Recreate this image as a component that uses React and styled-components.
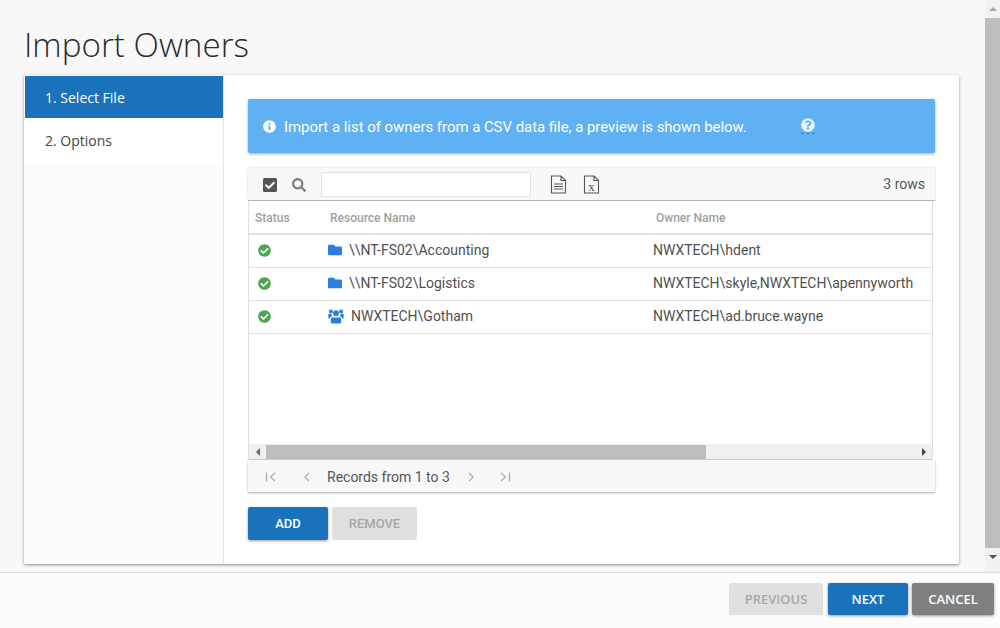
import React from 'react';
import styled, { createGlobalStyle } from 'styled-components';
import { FaInfoCircle, FaQuestionCircle, FaCheckSquare, FaSearch, FaCheckCircle, FaFolder } from 'react-icons/fa';

const GlobalStyle = createGlobalStyle`
  html, body {
    margin: 0;
    padding: 0;
    height: 100%;
    overflow: hidden;
    background: #f8f8f8;
  }
  * {
    box-sizing: border-box;
  }
  body {
    font-family: Roboto, "Liberation Sans", sans-serif;
  }
`;

const Page = styled.div`
  width: 1000px;
  height: 628px;
  display: flex;
  flex-direction: column;
`;

const Upper = styled.div`
  height: 572px;
  display: flex;
`;

const Main = styled.div`
  width: 985px;
  padding: 26px 26px 0 24px;
  display: flex;
  flex-direction: column;
`;

const PageTitle = styled.h1`
  margin: 0;
  height: 49px;
  font-family: "Open Sans", sans-serif;
  font-weight: 300;
  font-size: 33.2px;
  line-height: 38px;
  color: #2b2b2b;
`;

const Card = styled.div`
  height: 489px;
  display: flex;
  background: #fff;
  border-radius: 2px;
  box-shadow: 0 1px 3px rgba(0, 0, 0, 0.45);
`;

const Sidebar = styled.div`
  width: 200px;
  flex: none;
  padding: 1px 0 0 1px;
  background: #fcfcfc;
  border-right: 1px solid #e4e4e4;
`;

const Step = styled.div`
  height: ${p => (p.$active ? '42px' : '45px')};
  margin-bottom: ${p => (p.$active ? '1px' : '0')};
  padding: 0 0 ${p => (p.$active ? '0' : '2px')} 20px;
  display: flex;
  align-items: center;
  font-family: "Open Sans", sans-serif;
  font-size: 14px;
  background: ${p => (p.$active ? '#1a73ba' : '#fff')};
  color: ${p => (p.$active ? '#fff' : '#444')};
`;

const Content = styled.div`
  flex: 1;
  padding: 24px 24px 0 24px;
  display: flex;
  flex-direction: column;
`;

const Banner = styled.div`
  height: 54px;
  padding-left: 15px;
  display: flex;
  align-items: center;
  background: #60b0f4;
  border-radius: 2px;
  box-shadow: 0 1px 3px rgba(0, 0, 0, 0.35);
  color: #fff;
  font-size: 14.9px;
`;

const BannerText = styled.span`
  margin-left: 8px;
  width: 517px;
  padding-top: 1px;
`;

const HelpMark = styled.span`
  display: flex;
  padding-bottom: 1px;
  border-bottom: 1px dashed rgba(60, 80, 100, 0.55);
  color: #e8f6fb;
`;

const Toolbar = styled.div`
  margin-top: 15px;
  height: 33px;
  padding: 1px 10px 0 14px;
  display: flex;
  align-items: center;
  background: #f8f8f8;
  border-bottom: 1px solid #b4b4b4;
  box-shadow: 0 0 2px rgba(0, 0, 0, 0.2);
  color: #555;
`;

const SearchIcon = styled.span`
  display: flex;
  margin-left: 14px;
  color: #808080;
`;

const SearchInput = styled.input`
  margin-left: 15px;
  width: 210px;
  height: 25px;
  background: #fff;
  border: 1px solid #e2e2e2;
  outline: none;
`;

const ToolIcon = styled.svg`
  margin-left: ${p => p.$gap}px;
  width: 17px;
  height: 19px;
`;

const RowCount = styled.span`
  margin-left: auto;
  padding-bottom: 1px;
  font-size: 14px;
  color: #555;
`;

const Grid = styled.div`
  width: 685px;
  height: 259px;
  display: flex;
  flex-direction: column;
  background: #fff;
  border-left: 1px solid #e0e0e0;
  border-right: 1px solid #e0e0e0;
`;

const Row = styled.div`
  height: 33px;
  flex: none;
  padding-bottom: 2px;
  display: grid;
  grid-template-columns: 75px 325px 1fr;
  align-items: center;
  border-bottom: 1px solid #e2e2e2;
`;

const HeadRow = styled(Row)`
  padding-bottom: 0;
  border-bottom: 2px solid #e2e2e2;
  margin-top: 1px;
  font-size: 12px;
  font-weight: 500;
  color: #a0a0a0;
`;

const HeadCell = styled.div`
  padding-left: ${p => p.$pad}px;
`;

const StatusCell = styled.div`
  padding-left: 9px;
  display: flex;
  color: #4ca64f;
`;

const NameCell = styled.div`
  display: flex;
  align-items: center;
  font-size: 14px;
  color: #505050;
`;

const TypeIcon = styled.span`
  display: flex;
  margin-left: 4px;
  width: ${p => p.$w}px;
  color: #2a7de1;
`;

const GroupIcon = styled.svg`
  width: 16px;
  height: 16px;
  fill: currentColor;
`;

const OwnerCell = styled.div`
  padding-left: 4px;
  font-size: 14px;
  color: #505050;
  white-space: nowrap;
`;

const ScrollTrack = styled.div`
  margin-top: auto;
  height: 16px;
  display: flex;
  align-items: center;
  background: #f0f0f0;
  border-bottom: 1px solid #d0d0d0;
`;

const ArrowBtn = styled.div`
  width: 17px;
  flex: none;
  display: flex;
  justify-content: center;
  margin-left: ${p => (p.$end ? 'auto' : '0')};
`;

const ScrollThumb = styled.div`
  width: 440px;
  height: 14px;
  background: #bdbdbd;
`;

const ArrowLeft = styled.span`
  width: 0;
  height: 0;
  border-top: 4px solid transparent;
  border-bottom: 4px solid transparent;
  border-right: 4px solid #666;
`;

const ArrowRight = styled.span`
  width: 0;
  height: 0;
  border-top: 4px solid transparent;
  border-bottom: 4px solid transparent;
  border-left: 4px solid #444;
`;

const Pager = styled.div`
  height: 32px;
  padding: 1px 0 0 17px;
  display: flex;
  align-items: center;
  background: #f8f8f8;
  box-shadow: 0 1px 2px rgba(0, 0, 0, 0.35);
`;

const PagerIcon = styled.svg`
  width: 12px;
  height: 12px;
  margin-right: ${p => p.$gap}px;
  fill: none;
  stroke: #b4b4b4;
  stroke-width: 1.5;
`;

const PagerText = styled.span`
  width: 138px;
  font-size: 14px;
  color: #555;
`;

const Actions = styled.div`
  margin-top: 15px;
  display: flex;
  gap: 4px;
`;

const Button = styled.button`
  height: ${p => (p.$footer ? '32px' : '33px')};
  width: ${p => p.$w}px;
  padding: 0;
  border: none;
  border-radius: 2px;
  font-family: ${p => (p.$footer ? '"Open Sans", sans-serif' : 'Roboto, sans-serif')};
  font-size: 13px;
  font-weight: ${p => (p.$footer ? 600 : 500)};
  background: ${p => ({ primary: '#1a73ba', grey: '#808080', off: '#e0e0e0' }[p.$kind])};
  color: ${p => (p.$kind === 'off' ? '#a8a8a8' : '#fff')};
  box-shadow: ${p => (p.$kind === 'off' ? 'none' : '0 1px 3px rgba(0, 0, 0, 0.4)')};
`;

const PageScrollbar = styled.div`
  width: 15px;
  display: flex;
  flex-direction: column;
  background: #f1f1f1;
`;

const ScrollCap = styled.div`
  height: 18px;
  flex: none;
  display: flex;
  align-items: center;
  justify-content: center;
`;

const PageThumb = styled.div`
  height: 530px;
  flex: none;
  background: #bdbdbd;
`;

const CapUp = styled.span`
  width: 0;
  height: 0;
  border-left: 4px solid transparent;
  border-right: 4px solid transparent;
  border-bottom: 4px solid #a8a8a8;
`;

const CapDown = styled.span`
  width: 0;
  height: 0;
  border-left: 4px solid transparent;
  border-right: 4px solid transparent;
  border-top: 4px solid #555;
`;

const Footer = styled.div`
  flex: 1;
  padding: 10px 6px 0 0;
  display: flex;
  justify-content: flex-end;
  gap: 4px;
  background: #fcfcfc;
  border-top: 1px solid #dcdcdc;
`;

const PrevSlot = styled.div`
  margin-right: 1px;
`;

const rows = [
  { name: '\\\\NT-FS02\\Accounting', owner: 'NWXTECH\\hdent', kind: 'folder' },
  { name: '\\\\NT-FS02\\Logistics', owner: 'NWXTECH\\skyle,NWXTECH\\apennyworth', kind: 'folder' },
  { name: 'NWXTECH\\Gotham', owner: 'NWXTECH\\ad.bruce.wayne', kind: 'group' },
];

const docOutline = 'M1.5 1h9.5l4.5 4.5V18H1.5z M11 1v4.5h4.5';

export default function App() {
  return (
    <Page>
      <GlobalStyle />
      <Upper>
        <Main>
          <PageTitle>Import Owners</PageTitle>
          <Card>
            <Sidebar>
              <Step $active>1. Select File</Step>
              <Step>2. Options</Step>
            </Sidebar>
            <Content>
              <Banner>
                <FaInfoCircle size={13} />
                <BannerText>Import a list of owners from a CSV data file, a preview is shown below.</BannerText>
                <HelpMark><FaQuestionCircle size={14} /></HelpMark>
              </Banner>
              <Toolbar>
                <FaCheckSquare size={16} />
                <SearchIcon><FaSearch size={14} /></SearchIcon>
                <SearchInput />
                <ToolIcon $gap={19} viewBox="0 0 17 19" fill="none" stroke="#555" strokeWidth="1.1">
                  <path d={docOutline} />
                  <path d="M4 9h9M4 11.5h9M4 14h9" />
                </ToolIcon>
                <ToolIcon $gap={16} viewBox="0 0 17 19" fill="none" stroke="#555" strokeWidth="1.1">
                  <path d={docOutline} />
                  <text x="8.5" y="15.5" textAnchor="middle" fontFamily="Liberation Serif, serif" fontSize="13" fill="#555" stroke="none">x</text>
                </ToolIcon>
                <RowCount>3 rows</RowCount>
              </Toolbar>
              <Grid>
                <HeadRow>
                  <HeadCell $pad={6}>Status</HeadCell>
                  <HeadCell $pad={6}>Resource Name</HeadCell>
                  <HeadCell $pad={7}>Owner Name</HeadCell>
                </HeadRow>
                {rows.map(row => (
                  <Row key={row.name}>
                    <StatusCell><FaCheckCircle size={13} /></StatusCell>
                    <NameCell>
                      <TypeIcon $w={row.kind === 'group' ? 23 : 21}>
                        {row.kind === 'group' ? (
                          <GroupIcon viewBox="0 0 16 16">
                            <circle cx="8" cy="5.2" r="2.9" />
                            <circle cx="2.9" cy="3.4" r="2" />
                            <circle cx="13.1" cy="3.4" r="2" />
                            <path d="M4.4 9.4h7.2c1 0 1.6.7 1.6 1.6v3.2c0 .7-.5 1.2-1.2 1.2H4c-.7 0-1.2-.5-1.2-1.2V11c0-.9.6-1.6 1.6-1.6z" />
                            <path d="M.3 10V7c0-.7.5-1.1 1.1-1.1h2.1c-.1.9.2 1.7.8 2.4-1.3.2-2.3 1-2.5 2.3H.9c-.4 0-.6-.3-.6-.6zM15.7 10V7c0-.7-.5-1.1-1.1-1.1h-2.1c.1.9-.2 1.7-.8 2.4 1.3.2 2.3 1 2.5 2.3h.9c.4 0 .6-.3.6-.6z" />
                          </GroupIcon>
                        ) : <FaFolder size={14} />}
                      </TypeIcon>
                      {row.name}
                    </NameCell>
                    <OwnerCell>{row.owner}</OwnerCell>
                  </Row>
                ))}
                <ScrollTrack>
                  <ArrowBtn><ArrowLeft /></ArrowBtn>
                  <ScrollThumb />
                  <ArrowBtn $end><ArrowRight /></ArrowBtn>
                </ScrollTrack>
              </Grid>
              <Pager>
                <PagerIcon $gap={24} viewBox="0 0 12 12"><path d="M1.5 1.5v9M10 2L5.5 6l4.5 4" /></PagerIcon>
                <PagerIcon $gap={14} viewBox="0 0 12 12"><path d="M8 2L4 6l4 4" /></PagerIcon>
                <PagerText>Records from 1 to 3</PagerText>
                <PagerIcon $gap={22} viewBox="0 0 12 12"><path d="M4 2l4 4-4 4" /></PagerIcon>
                <PagerIcon $gap={0} viewBox="0 0 12 12"><path d="M2 2l4.5 4L2 10M10.5 1.5v9" /></PagerIcon>
              </Pager>
              <Actions>
                <Button $kind="primary" $w={80}>ADD</Button>
                <Button $kind="off" $w={85}>REMOVE</Button>
              </Actions>
            </Content>
          </Card>
        </Main>
        <PageScrollbar>
          <ScrollCap><CapUp /></ScrollCap>
          <PageThumb />
          <ScrollCap><CapDown /></ScrollCap>
        </PageScrollbar>
      </Upper>
      <Footer>
        <PrevSlot><Button $footer $kind="off" $w={94}>PREVIOUS</Button></PrevSlot>
        <Button $footer $kind="primary" $w={80}>NEXT</Button>
        <Button $footer $kind="grey" $w={82}>CANCEL</Button>
      </Footer>
    </Page>
  );
}
